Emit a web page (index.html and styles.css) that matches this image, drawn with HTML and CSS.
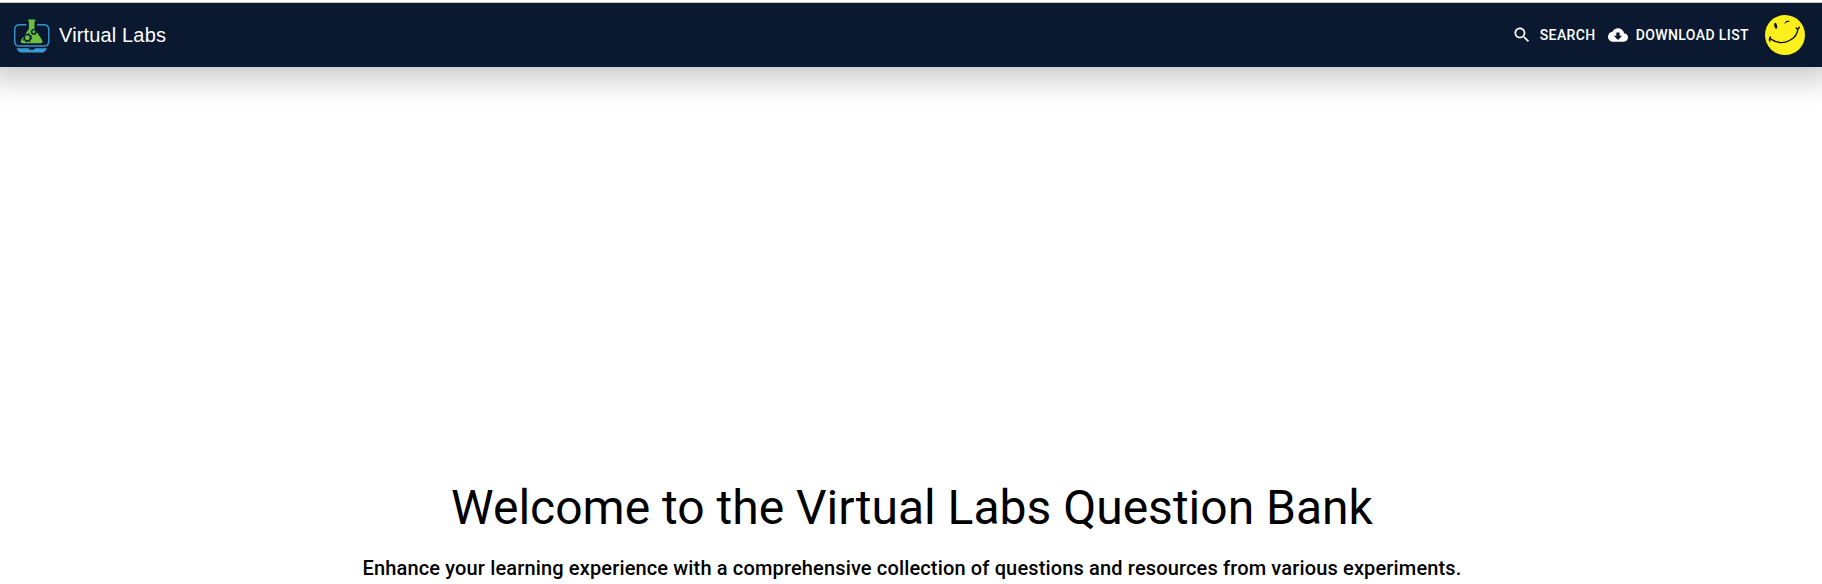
FILE: index.html
```html
<!DOCTYPE html>
<html lang="en">
<head>
<meta charset="utf-8">
<meta name="viewport" content="width=device-width, initial-scale=1">
<title>Virtual Labs Question Bank</title>
<link rel="stylesheet" href="styles.css">
</head>
<body>
<header class="navbar">
  <a class="brand" href="#">
    <svg class="brand-logo" viewBox="0 0 36 36" aria-hidden="true">
      <path d="M13 7.500H6.500Q1.700 7.500 1.700 12.300V23.500Q1.700 28.300 6.500 28.300H30Q34.800 28.300 34.800 23.500V12.300Q34.800 7.500 30 7.500H23.500" fill="none" stroke="#3394cc" stroke-width="1.400"/>
      <path d="M3.300 30.500H15L16 31.800H20.500L21.500 30.500H33.200Q31 34.600 28.500 34.600H8Q5.500 34.600 3.300 30.500Z" fill="#3a9bd3"/>
      <path d="M14.700 2.500H21.700V4.200H20.900V11.500L28 21.800Q29.800 25.300 26.500 25.500H9.700Q6.500 25.300 8.200 21.800L15.500 11.500V4.200H14.700Z" fill="#6cc040"/>
      <circle cx="14" cy="20.200" r="3.900" fill="none" stroke="#0a192f" stroke-width="1.400" stroke-dasharray="1.532 1.532"/>
      <circle cx="14" cy="20.200" r="3" fill="none" stroke="#0a192f" stroke-width="1.300"/>
      <circle cx="20.200" cy="14.400" r="2.600" fill="none" stroke="#0a192f" stroke-width="1.100" stroke-dasharray="1.021 1.021"/>
      <circle cx="20.200" cy="14.400" r="2" fill="none" stroke="#0a192f" stroke-width="1.100"/>
    </svg>
    <span>Virtual Labs</span>
  </a>
  <nav class="actions">
    <button class="action" type="button">
      <svg class="action-icon" viewBox="0 0 24 24" aria-hidden="true"><path d="M15.500 14h-.79l-.28-.27C15.410 12.590 16 11.110 16 9.500 16 5.910 13.090 3 9.500 3S3 5.910 3 9.500 5.910 16 9.500 16c1.610 0 3.090-.59 4.230-1.570l.27.28v.79l5 4.990L20.490 19l-4.990-5zm-6 0C7.010 14 5 11.990 5 9.500S7.010 5 9.500 5 14 7.010 14 9.500 11.990 14 9.500 14z"/></svg>
      Search
    </button>
    <button class="action" type="button">
      <svg class="action-icon" viewBox="0 0 24 24" aria-hidden="true"><path d="M19.350 10.040C18.670 6.590 15.640 4 12 4 9.110 4 6.600 5.640 5.350 8.040 2.340 8.360 0 10.910 0 14c0 3.310 2.690 6 6 6h13c2.760 0 5-2.240 5-5 0-2.640-2.050-4.780-4.650-4.960zM17 13l-5 5-5-5h3V9h4v4h3z"/></svg>
      Download List
    </button>
    <button class="avatar" type="button" aria-label="Account">
      <svg class="avatar-face" viewBox="0 0 40 40" aria-hidden="true">
        <circle cx="20" cy="20" r="20" fill="#fcf01c"/>
        <ellipse cx="10.700" cy="10.700" rx="1.400" ry="3" transform="rotate(-12 10.700 10.700)" fill="#0b0b0b"/>
        <path d="M19.800 8.200Q20.800 5.600 24.300 6.200Q21.800 6.200 19.800 8.200Z" fill="#0b0b0b" stroke="#0b0b0b" stroke-width=".8"/>
        <path d="M5 23.700C11 27.800 18.500 28.600 24.500 25.500C30 22.500 32.800 18.500 32.800 13.500" fill="none" stroke="#0b0b0b" stroke-width="1.400"/>
        <path d="M5.400 22Q4 24 4.900 26M31.200 13Q33.500 14.800 34.200 12.200" fill="none" stroke="#0b0b0b" stroke-width="1.500" stroke-linecap="round"/>
      </svg>
    </button>
  </nav>
</header>
<main class="hero">
  <h1 class="hero-title">Welcome to the Virtual Labs Question Bank</h1>
  <p class="hero-text">Enhance your learning experience with a comprehensive collection of questions and resources from various experiments.</p>
</main>
</body>
</html>
```
FILE: styles.css
```css
* { box-sizing: border-box; }
body {
  margin: 0;
  padding-top: 2px;
  background: #fff;
  color: #000;
  font-family: Roboto, "Liberation Sans", sans-serif;
}
.navbar {
  display: flex;
  align-items: center;
  justify-content: space-between;
  min-height: 65px;
  padding: 0 17px 0 13px;
  border-top: 1px solid #c8c8c8;
  background: #0a192f;
  color: #fff;
  box-shadow: 0 0 30px 12px rgba(0, 0, 0, 0.22);
  clip-path: inset(0 0 -60px 0);
}
.brand {
  display: flex;
  align-items: center;
  gap: 9px;
  color: inherit;
  font: 20px/32px "Liberation Sans", Arial, sans-serif;
  letter-spacing: 0.0075em;
  text-decoration: none;
}
.brand-logo { width: 37px; height: 37px; }
.actions { display: flex; align-items: center; }
.action {
  display: flex;
  align-items: center;
  gap: 8px;
  padding: 6px;
  border: 0;
  background: none;
  color: inherit;
  font: 500 14px/24px Roboto, sans-serif;
  letter-spacing: 0.02857em;
  text-transform: uppercase;
  cursor: pointer;
}
.action-icon { width: 20px; height: 20px; fill: currentColor; }
.avatar {
  width: 40px;
  height: 40px;
  margin-left: 10px;
  padding: 0;
  border: 0;
  border-radius: 50%;
  background: none;
  cursor: pointer;
}
.avatar-face { display: block; width: 100%; height: 100%; }
.hero { padding: 413px 24px 0 26px; text-align: center; }
.hero-title { margin: 0 0 16px; font-size: 48px; font-weight: 400; line-height: 56px; }
.hero-text { margin: 0; font-size: 20px; font-weight: 500; line-height: 32px; letter-spacing: 0.0075em; }
```
